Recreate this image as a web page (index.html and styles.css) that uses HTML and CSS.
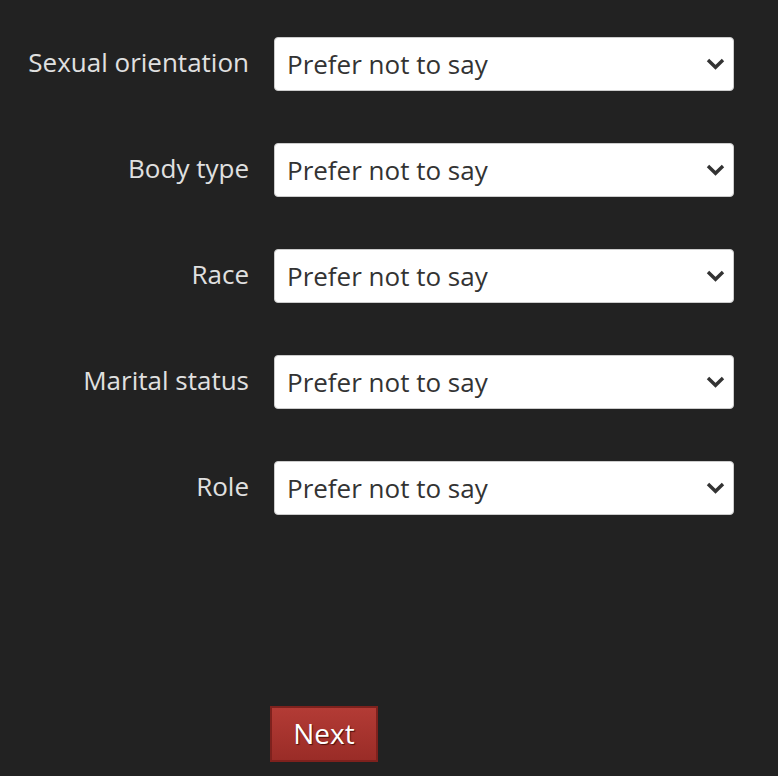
FILE: index.html
```html
<!DOCTYPE html>
<html>
<head>
<meta charset="utf-8">
<link rel="stylesheet" href="styles.css">
</head>
<body>
<form class="form">
  <div class="row">
    <label class="label">Sexual orientation</label>
    <div class="select"><span>Prefer not to say</span><svg class="chev" viewBox="0 0 19 12" width="19" height="12"><path d="M2 2 L9.5 9.3 L17 2" fill="none" stroke="#333" stroke-width="3.4"/></svg></div>
  </div>
  <div class="row">
    <label class="label">Body type</label>
    <div class="select"><span>Prefer not to say</span><svg class="chev" viewBox="0 0 19 12" width="19" height="12"><path d="M2 2 L9.5 9.3 L17 2" fill="none" stroke="#333" stroke-width="3.4"/></svg></div>
  </div>
  <div class="row">
    <label class="label">Race</label>
    <div class="select"><span>Prefer not to say</span><svg class="chev" viewBox="0 0 19 12" width="19" height="12"><path d="M2 2 L9.5 9.3 L17 2" fill="none" stroke="#333" stroke-width="3.4"/></svg></div>
  </div>
  <div class="row">
    <label class="label">Marital status</label>
    <div class="select"><span>Prefer not to say</span><svg class="chev" viewBox="0 0 19 12" width="19" height="12"><path d="M2 2 L9.5 9.3 L17 2" fill="none" stroke="#333" stroke-width="3.4"/></svg></div>
  </div>
  <div class="row">
    <label class="label">Role</label>
    <div class="select"><span>Prefer not to say</span><svg class="chev" viewBox="0 0 19 12" width="19" height="12"><path d="M2 2 L9.5 9.3 L17 2" fill="none" stroke="#333" stroke-width="3.4"/></svg></div>
  </div>
  <div class="actions">
    <button type="button" class="next">Next</button>
  </div>
</form>
</body>
</html>
```
FILE: styles.css
```css
html, body {
  margin: 0;
  padding: 0;
  background: #222222;
  height: 100%;
}
body {
  font-family: "Open Sans", "Liberation Sans", sans-serif;
}
.form {
  padding-top: 37px;
  display: flex;
  flex-direction: column;
  gap: 52px;
}
.row {
  display: grid;
  grid-template-columns: 249px 460px;
  column-gap: 25px;
  align-items: center;
}
.label {
  text-align: right;
  color: #e0e0e0;
  font-size: 26px;
  padding-bottom: 4px;
}
.select {
  box-sizing: border-box;
  height: 54px;
  background: #ffffff;
  border: 1px solid #cccccc;
  border-radius: 4px;
  display: flex;
  align-items: center;
  justify-content: space-between;
  padding: 0 8px 0 12px;
  color: #333333;
  font-size: 26px;
}
.chev {
  display: block;
}
.actions {
  padding-left: 270px;
  margin-top: 139px;
}
.next {
  box-sizing: border-box;
  width: 108px;
  height: 56px;
  font-family: "Open Sans", "Liberation Sans", sans-serif;
  font-size: 28px;
  color: #ffffff;
  background: linear-gradient(#b33b35, #9a2c27);
  border: 2px solid #7e211d;
  border-radius: 0;
  text-shadow: 1px 1px 1px #4a0e0c;
  padding: 0 0 2px 0;
}
```
